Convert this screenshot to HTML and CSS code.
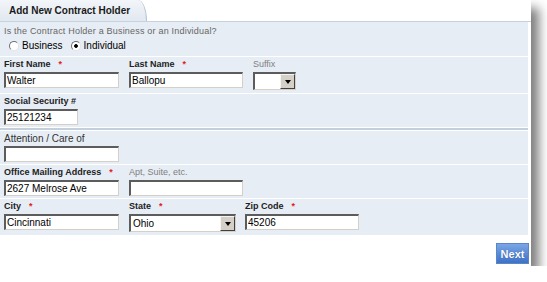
FILE: index.html
```html
<!DOCTYPE html>
<html lang="en">
<head>
  <meta charset="UTF-8" />
  <title>Add New Contract Holder</title>
  <link rel="stylesheet" href="styles.css">
</head>
<body>
  <div class="card">
    <div class="tabs">
      <div class="tab">Add New Contract Holder</div>
    </div>

    <div class="section question">
      <div class="hint">Is the Contract Holder a Business or an Individual?</div>
      <div class="radios">
        <label class="radio"><input type="radio" name="holderType">Business</label>
        <label class="radio"><input type="radio" name="holderType" checked>Individual</label>
      </div>
    </div>

    <div class="section row tall">
      <div class="field col-a">
        <span class="lbl">First Name<em>*</em></span>
        <input class="text w115" type="text" value="Walter">
      </div>
      <div class="field col-b">
        <span class="lbl">Last Name<em>*</em></span>
        <input class="text w114" type="text" value="Ballopu">
      </div>
      <div class="field">
        <span class="lbl light">Suffix</span>
        <div class="select w43">
          <span class="select-value"></span>
          <span class="select-btn"></span>
        </div>
      </div>
    </div>

    <div class="section row">
      <div class="field">
        <span class="lbl">Social Security #</span>
        <input class="text w74" type="text" value="25121234">
      </div>
    </div>

    <hr class="divider">

    <div class="section row">
      <div class="field">
        <span class="lbl plain">Attention / Care of</span>
        <input class="text w115" type="text" value="">
      </div>
    </div>

    <div class="section row">
      <div class="field col-a">
        <span class="lbl">Office Mailing Address<em>*</em></span>
        <input class="text w115" type="text" value="2627 Melrose Ave">
      </div>
      <div class="field">
        <span class="lbl light">Apt, Suite, etc.</span>
        <input class="text w114" type="text" value="">
      </div>
    </div>

    <div class="section row tall">
      <div class="field col-a">
        <span class="lbl">City<em>*</em></span>
        <input class="text w115" type="text" value="Cincinnati">
      </div>
      <div class="field col-c">
        <span class="lbl">State<em>*</em></span>
        <div class="select w107">
          <span class="select-value">Ohio</span>
          <span class="select-btn"></span>
        </div>
      </div>
      <div class="field">
        <span class="lbl">Zip Code<em>*</em></span>
        <input class="text w114" type="text" value="45206">
      </div>
    </div>

    <div class="actions">
      <button class="btn-next">Next</button>
    </div>
  </div>
</body>
</html>
```

FILE: styles.css
```css
body {
  margin: 0;
  padding: 0;
  background: #fff;
  font-family: "Liberation Sans", Arial, sans-serif;
}
.card {
  width: 531px;
  height: 266px;
  background: #fff;
  box-shadow: 8px 8px 10px rgba(0, 0, 0, 0.5);
}
.tabs {
  height: 21px;
  border-bottom: 1px solid #c6d3df;
}
.tab {
  width: 137px;
  height: 21px;
  padding-left: 9px;
  box-sizing: content-box;
  font-size: 10px;
  font-weight: bold;
  line-height: 21px;
  color: #1a1a1a;
  background: linear-gradient(#f2f5f9, #e1e8f0);
  border-right: 1px solid #b3c3d2;
  border-top-right-radius: 9px 21px;
}
.section {
  width: 528px;
  box-sizing: border-box;
  background: #e7edf5;
  padding: 2px 4px 2px;
  margin-top: 1px;
}
.question {
  margin-top: 0;
  padding-top: 4px;
  padding-bottom: 4px;
}
.hint {
  font-size: 9px;
  line-height: 11px;
  letter-spacing: 0.2px;
  color: #666;
}
.radios {
  display: flex;
  margin-top: 3px;
  padding-left: 5px;
  height: 12px;
  line-height: 12px;
  font-size: 10px;
  color: #000;
}
.radio {
  display: flex;
  align-items: center;
  margin-right: 8px;
}
.radio input {
  appearance: none;
  -webkit-appearance: none;
  width: 10px;
  height: 10px;
  margin: 0 3px 0 0;
  border-radius: 50%;
  border: 1px solid;
  border-color: #6f6f6f #e4e4e4 #e4e4e4 #6f6f6f;
  background: #fff;
}
.radio input:checked {
  background: radial-gradient(circle, #000 0 1.5px, #fff 2.2px);
}
.row {
  display: flex;
  align-items: flex-start;
}
.row.tall {
  padding-bottom: 3px;
}
.field {
  display: flex;
  flex-direction: column;
}
.col-a { width: 125px; }
.col-b { width: 124px; }
.col-c { width: 116px; }
.lbl {
  display: block;
  height: 11px;
  margin-bottom: 2px;
  font-size: 9px;
  font-weight: bold;
  line-height: 11px;
  color: #222;
  white-space: nowrap;
}
.lbl em {
  font-style: normal;
  color: #e41c1c;
  margin-left: 8px;
}
.lbl.light {
  font-weight: normal;
  color: #808080;
}
.lbl.plain {
  font-size: 10px;
  font-weight: normal;
  color: #333;
}
.text {
  height: 16px;
  box-sizing: border-box;
  margin: 0;
  padding: 0 1px;
  font-family: "Liberation Sans", Arial, sans-serif;
  font-size: 10px;
  color: #000;
  background: #fff;
  border-style: solid;
  border-width: 2px 1px 1px 2px;
  border-color: #5c5c5c #d4d0c8 #d4d0c8 #5c5c5c;
  outline: none;
}
.w74 { width: 74px; }
.w114 { width: 114px; }
.w115 { width: 115px; }
.w43 { width: 43px; }
.w107 { width: 107px; }
.select {
  display: flex;
  height: 18px;
  box-sizing: border-box;
  background: #fff;
  border-style: solid;
  border-width: 2px 1px 1px 2px;
  border-color: #5c5c5c #d4d0c8 #d4d0c8 #5c5c5c;
  font-size: 10px;
  color: #000;
}
.select-value {
  flex: 1;
  padding-left: 2px;
  line-height: 15px;
}
.select-btn {
  width: 15px;
  display: flex;
  align-items: center;
  justify-content: center;
  box-sizing: border-box;
  background: #d4d0c8;
  border: 1px solid;
  border-color: #f4f4f4 #404040 #404040 #f4f4f4;
}
.select-btn::after {
  content: "";
  border-left: 3.5px solid transparent;
  border-right: 3.5px solid transparent;
  border-top: 4px solid #000;
}
.divider {
  width: 528px;
  height: 2px;
  margin: 1px 0 1px;
  border: none;
  background: #c3d0dc;
}
.divider + .section {
  margin-top: 0;
}
.actions {
  display: flex;
  justify-content: flex-end;
  margin-top: 8px;
  padding-right: 2px;
}
.btn-next {
  width: 33px;
  height: 21px;
  padding: 0;
  font-family: "Liberation Sans", Arial, sans-serif;
  font-size: 11px;
  font-weight: bold;
  color: #fff;
  background: linear-gradient(#79a6e6, #3e72c6);
  border: 1px solid #5a86c8;
  text-shadow: 0 0 1px #2a4f90;
  cursor: pointer;
}
```
